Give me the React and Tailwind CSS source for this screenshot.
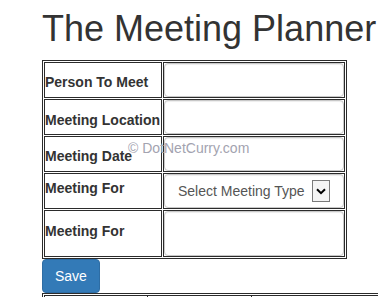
import React from "react";

const font = { fontFamily: '"Liberation Sans", Arial, sans-serif' };

function Label({ children, shift }) {
  return (
    <td className={`border border-[#2b2b2b] p-0 align-middle ${shift}`}>
      <span className="block text-[14px] leading-[20px] font-bold text-[#333] whitespace-nowrap">{children}</span>
    </td>
  );
}

function InputCell({ h = "h-[34px]", children }) {
  return (
    <td className="border border-[#2b2b2b] p-0 align-middle">
      <div className={`${h} w-full rounded-[4px] border border-[#c8c8c8] bg-white shadow-[inset_0_1px_1px_rgba(0,0,0,0.075)]`}>
        {children}
      </div>
    </td>
  );
}

export default function App() {
  return (
    <div className="relative w-[378px] h-[297px] overflow-hidden bg-white" style={font}>
      <div className="pl-[42px]">
        <h1 className="mt-[9px] mb-[11px] h-[40px] text-[36px] leading-[40px] font-normal text-[#333] whitespace-nowrap">
          The Meeting Planner
        </h1>
        <table className="border border-[#2b2b2b] border-separate border-spacing-[1px] w-[305px] table-fixed">
          <colgroup>
            <col className="w-[118px]" />
            <col className="w-[182px]" />
          </colgroup>
          <tbody>
            <tr className="h-[36px]">
              <Label shift="pt-[4px]">Person To Meet</Label>
              <InputCell />
            </tr>
            <tr className="h-[36px]">
              <Label shift="pt-[5px]">Meeting Location</Label>
              <InputCell />
            </tr>
            <tr className="h-[36px]">
              <Label shift="pt-[4px]">Meeting Date</Label>
              <InputCell />
            </tr>
            <tr className="h-[36px]">
              <Label shift="pb-[6px]">Meeting For</Label>
              <InputCell>
                <div className="flex h-full items-center pl-[13px] gap-[7px]">
                  <span className="text-[14px] leading-[20px] text-[#555] whitespace-nowrap">Select Meeting Type</span>
                  <span className="flex h-[22px] w-[18px] items-center justify-center border border-[#7a7a7a] bg-[#f4f4f4]">
                    <svg width="10" height="7" viewBox="0 0 10 7">
                      <path d="M1 1.2 L5 5.2 L9 1.2" fill="none" stroke="#000" strokeWidth="2" />
                    </svg>
                  </span>
                </div>
              </InputCell>
            </tr>
            <tr className="h-[47px]">
              <Label shift="pb-[6px]">Meeting For</Label>
              <InputCell h="h-[45px]" />
            </tr>
          </tbody>
        </table>
        <button className="block h-[34px] px-[12px] rounded-[4px] border border-[#2e6da4] bg-[#337ab7] text-white text-[14px] leading-[20px]">
          Save
        </button>
        <div className="border-t border-l border-[#2b2b2b] h-[10px] w-[400px] pt-px pl-px">
          <div className="flex border-t border-[#2b2b2b] h-full">
            <div className="w-[103px] border-l border-[#2b2b2b]" />
            <div className="w-[104px] border-l border-[#2b2b2b]" />
            <div className="flex-1 border-l border-[#2b2b2b]" />
          </div>
        </div>
      </div>
      <div className="absolute left-[128px] top-[140px] text-[14px] leading-[16px] text-[#a3a3b0] whitespace-nowrap">
        © DotNetCurry.com
      </div>
    </div>
  );
}
